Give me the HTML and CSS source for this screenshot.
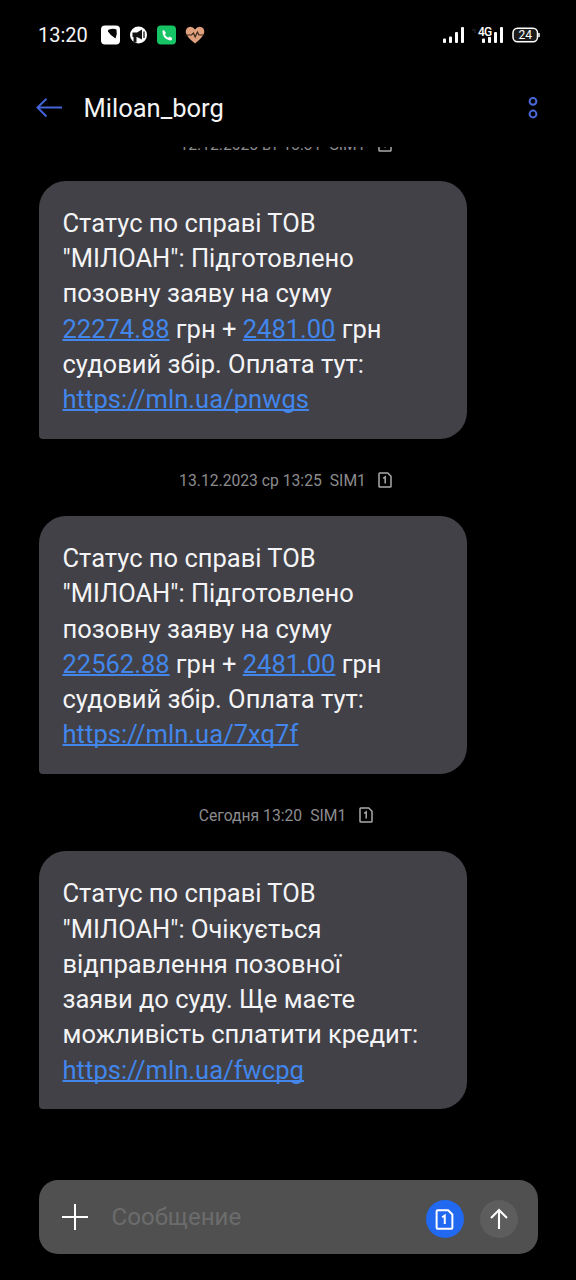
FILE: index.html
```html
<!DOCTYPE html>
<html lang="uk">
<head>
<meta charset="utf-8">
<title>Miloan_borg</title>
<link rel="stylesheet" href="styles.css">
</head>
<body>
<svg class="defs" width="0" height="0">
  <symbol id="sim" viewBox="0 0 14 16">
    <path d="M1.8 1H9.8L13 4.2V14.2Q13 15 12.2 15H1.8Q1 15 1 14.2V1.8Q1 1 1.8 1Z" fill="none" stroke="currentColor" stroke-width="1.5" stroke-linejoin="round"/>
    <path d="M5.2 6.3L7.2 5V11.4" fill="none" stroke="currentColor" stroke-width="1.5"/>
  </symbol>
</svg>
<div class="phone">
  <div class="status">
    <span class="clock">13:20</span>
    <svg class="notices" width="106" height="20" viewBox="0 0 106 20">
      <rect x="0" y="0.5" width="19" height="19" rx="4" fill="#fff"/>
      <path d="M8 4.5Q12 3 15.5 4.5Q16.5 9 14.5 13.5Q9 10 7 6.5Q6.6 5 8 4.5Z" fill="#050505"/>
      <circle cx="37.5" cy="10" r="8.5" fill="#fff"/>
      <path d="M31.5 7.5H36L41 4.5V14.5L36 12H31.5Z M32.5 12H35.5V17.5H32.5Z" fill="#111"/>
      <path d="M43 6.5V13" stroke="#111" stroke-width="1.3"/>
      <rect x="56" y="0.5" width="19" height="19" rx="4" fill="#16c465"/>
      <path d="M61.5 5.5Q63 4.5 64 6.5L65 8.2L63.8 9.5Q65 11.8 67.2 12.8L68.5 11.6L71 13Q71.5 15.5 69 15.5Q61 14 61.5 5.5Z" fill="#fff"/>
      <path d="M94 18.5Q85 11.5 84.7 7Q84.8 2 89.4 1.8Q92.3 1.8 94 4.4Q95.8 1.8 98.7 1.8Q103.3 2 103.3 7Q103 11.5 94 18.5Z" fill="#dfa17d"/>
      <path d="M84.5 10H90.5L92.5 8L94.2 12L96.4 7L98 10H103.5" fill="none" stroke="#3a2418" stroke-width="1.2"/>
    </svg>
    <svg class="signals" width="98" height="18" viewBox="0 0 98 18">
      <g fill="#fff">
        <rect x="0" y="12.5" width="3" height="4.5" rx="1"/><rect x="6" y="10.5" width="3" height="6.5" rx="1"/><rect x="12" y="6" width="3" height="11" rx="1"/><rect x="18" y="1" width="3" height="16" rx="1"/>
        <rect x="39" y="12.5" width="3" height="4.5" rx="1"/><rect x="45" y="10.5" width="3" height="6.5" rx="1"/><rect x="51" y="6" width="3" height="11" rx="1"/><rect x="57" y="1" width="3" height="16" rx="1"/>
      </g>
      <path d="M32 3V7M29 4H31" stroke="#333" stroke-width="1"/>
      <text class="net" x="35" y="9.5">4G</text>
      <rect x="70" y="2.2" width="24.5" height="13.6" rx="4.5" fill="#1c1c1c" stroke="#fff" stroke-width="1.5"/>
      <path d="M96 7V11" stroke="#fff" stroke-width="1.5"/>
      <text class="charge" x="82.2" y="13.3">24</text>
    </svg>
  </div>
  <header class="header">
    <svg width="27" height="20" viewBox="0 0 27 20"><path d="M26 9.5H1.5M10.5 0.8L1.5 9.5L10.5 18.5" fill="none" stroke="#4465d8" stroke-width="1.9"/></svg>
    <h1 class="title">Miloan_borg</h1>
    <svg class="more" width="12" height="24" viewBox="0 0 12 24"><g fill="none" stroke="#4968d6" stroke-width="2"><circle cx="6" cy="5.3" r="3.4"/><circle cx="6" cy="18" r="3.4"/></g></svg>
  </header>
  <main class="thread">
    <div class="meta"><span>12.12.2023 вт 13:31</span><span>SIM1</span><svg class="sim"><use href="#sim"/></svg></div>
    <p class="bubble">Статус по справі ТОВ<br>"МІЛОАН": Підготовлено<br>позовну заяву на суму<br><a>22274.88</a> грн + <a>2481.00</a> грн<br>судовий збір. Оплата тут:<br><a class="url">https://mln.ua/pnwgs</a></p>
    <div class="meta"><span>13.12.2023 ср 13:25</span><span>SIM1</span><svg class="sim"><use href="#sim"/></svg></div>
    <p class="bubble">Статус по справі ТОВ<br>"МІЛОАН": Підготовлено<br>позовну заяву на суму<br><a>22562.88</a> грн + <a>2481.00</a> грн<br>судовий збір. Оплата тут:<br><a class="url">https://mln.ua/7xq7f</a></p>
    <div class="meta"><span>Сегодня 13:20</span><span>SIM1</span><svg class="sim"><use href="#sim"/></svg></div>
    <p class="bubble">Статус по справі ТОВ<br>"МІЛОАН": Очікується<br>відправлення позовної<br>заяви до суду. Ще маєте<br>можливість сплатити кредит:<br><a class="url">https://mln.ua/fwcpg</a></p>
  </main>
  <footer class="composer">
    <svg width="28" height="28" viewBox="0 0 28 28"><path d="M14 1V27M1 14H27" stroke="#fff" stroke-width="2"/></svg>
    <span class="placeholder">Сообщение</span>
    <span class="round round-sim"><svg width="19" height="21"><use href="#sim"/></svg></span>
    <span class="round"><svg width="20" height="22" viewBox="0 0 20 22"><path d="M10 21V2M2 10L10 2L18 10" fill="none" stroke="#fff" stroke-width="2.1"/></svg></span>
  </footer>
</div>
</body>
</html>
```
FILE: styles.css
```css
* { box-sizing: border-box; }
body {
  margin: 0;
  background: #000;
  color: #f4f4f6;
  font-family: Roboto, "Noto Sans", sans-serif;
}
.defs { display: block; height: 0; }
.phone {
  width: 576px;
  height: 1280px;
  display: flex;
  flex-direction: column;
  overflow: hidden;
}
.status {
  height: 70px;
  padding: 0 35px 0 38px;
  display: flex;
  align-items: center;
  flex-shrink: 0;
}
.clock { width: 63px; font-size: 20px; line-height: 24px; white-space: nowrap; }
.signals { margin-left: auto; }
.net { font-size: 12px; font-weight: 500; letter-spacing: -0.8px; fill: #fff; stroke: #000; stroke-width: 2px; paint-order: stroke; }
.charge { font-size: 12px; text-anchor: middle; fill: #fff; }
.header {
  height: 77px;
  padding: 0 37px 2px 36px;
  display: flex;
  align-items: center;
  flex-shrink: 0;
}
.title { margin: 0 0 0 20.5px; font-size: 25.5px; line-height: 30px; font-weight: 400; }
.more { margin-left: auto; }
.thread {
  height: 962px;
  padding: 0 38px 0 38.5px;
  display: flex;
  flex-direction: column;
  justify-content: flex-end;
  flex-shrink: 0;
  overflow: hidden;
}
.meta {
  height: 77.25px;
  padding: 7px 5px 0 0;
  display: flex;
  align-items: center;
  justify-content: center;
  gap: 8px;
  flex-shrink: 0;
  color: #8c8c8e;
  font-size: 15.7px;
  line-height: 20px;
  white-space: nowrap;
}
.sim { width: 14px; height: 16px; margin: -2px 0 0 4.5px; color: #aaa; }
.bubble {
  width: 428.5px;
  height: 258px;
  margin: 0;
  padding: 25.3px 24px 0;
  flex-shrink: 0;
  border-radius: 27px 27px 27px 4px;
  background: #414147;
  font-size: 25.5px;
  line-height: 35.25px;
  white-space: nowrap;
}
.bubble a {
  color: #4286ec;
  text-decoration: underline;
  text-decoration-thickness: 1.5px;
  text-decoration-skip-ink: none;
}
.bubble .url { letter-spacing: 0.05px; }
.composer {
  width: 499px;
  height: 74px;
  margin: 71px 0 0 38.5px;
  padding: 0 20px 0 22px;
  display: flex;
  align-items: center;
  flex-shrink: 0;
  border-radius: 19px;
  background: #505050;
}
.placeholder { margin-left: 23px; flex: 1; font-size: 24.1px; color: #6c6c6c; }
.round {
  width: 38px;
  height: 38px;
  margin: 4px 0 0 16px;
  display: flex;
  align-items: center;
  justify-content: center;
  border-radius: 50%;
  background: #5d5d5d;
  color: #fff;
}
.round-sim { background: #2169f0; }
```
